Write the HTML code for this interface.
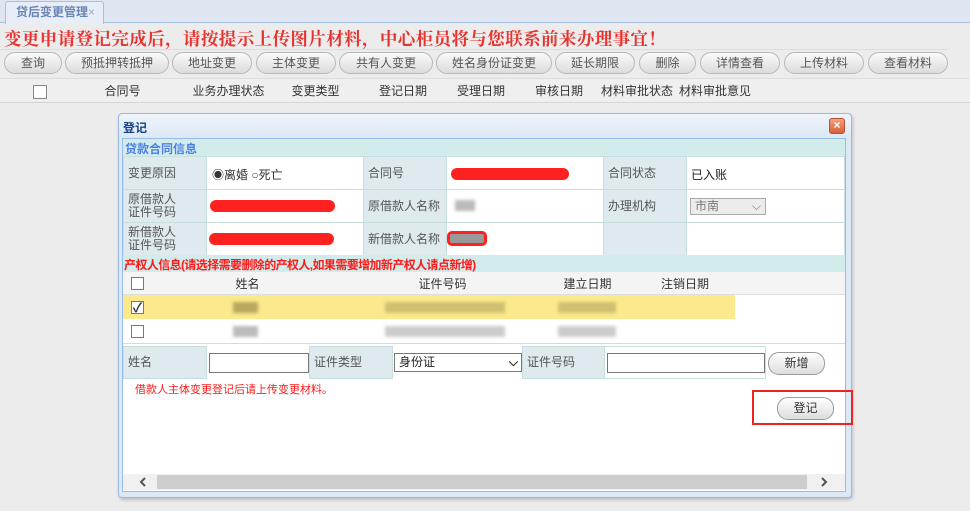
<!DOCTYPE html><html><head><meta charset="utf-8"><style>
*{margin:0;padding:0;box-sizing:border-box}
body{width:970px;height:511px;overflow:hidden;background:#ebebeb;font-family:"Liberation Sans","Noto Sans CJK SC",sans-serif;font-size:12px;color:#333;position:relative}
.a{position:absolute}
.btn{position:absolute;top:52px;height:22px;border:1px solid #b8b8b8;border-radius:11px;background:linear-gradient(#fafafa,#dcdcdc);text-align:center;line-height:20px;color:#555;font-size:12px}
.hd{position:absolute;top:80px;height:22px;line-height:22px;text-align:center;color:#333}
.lab{position:absolute;background:#deeaee;color:#555;padding-left:4px;border:1px solid #c6dede}
.cell{position:absolute;background:#fff;border:1px solid #c6dede}
.red{background:#ff2020;border-radius:6px;position:absolute;height:11px}
.blur{position:absolute;background:#bbb;filter:blur(1.5px)}
.cb{position:absolute;width:13px;height:13px;border:1px solid #777;background:#fff}
.rb{border-radius:11px;border:1px solid #999;background:linear-gradient(#fff,#ddd);text-align:center;position:absolute;line-height:21px;color:#333}
</style></head><body>
<div class="a" style="left:0;top:0;width:970px;height:23px;background:#dfe6f1;border-bottom:1px solid #a8c0df"></div>
<div class="a" style="left:5px;top:1px;width:99px;height:23px;background:#e8eef7;border:1px solid #a8c0df;border-bottom:none;border-radius:3px 3px 0 0;color:#6b85b5;line-height:20px;padding-left:10px;font-size:12px;font-weight:bold">贷后变更管理<span style="color:#9ab;font-weight:normal">×</span></div>
<div class="a" style="left:0;top:24px;width:970px;height:487px;background:#ececec"></div>
<div class="a" style="left:4px;top:26px;font-family:'Noto Serif CJK SC',serif;font-weight:bold;font-size:17.5px;color:#e8322e;white-space:nowrap;letter-spacing:0.4px">变更申请登记完成后，请按提示上传图片材料，中心柜员将与您联系前来办理事宜！</div>
<div class="a" style="left:0;top:49px;width:948px;height:1px;background:#ddd"></div>
<div class="btn" style="left:4px;width:58px">查询</div>
<div class="btn" style="left:65px;width:104px">预抵押转抵押</div>
<div class="btn" style="left:172px;width:80px">地址变更</div>
<div class="btn" style="left:256px;width:80px">主体变更</div>
<div class="btn" style="left:339px;width:94px">共有人变更</div>
<div class="btn" style="left:436px;width:116px">姓名身份证变更</div>
<div class="btn" style="left:555px;width:80px">延长期限</div>
<div class="btn" style="left:639px;width:57px">删除</div>
<div class="btn" style="left:700px;width:80px">详情查看</div>
<div class="btn" style="left:784px;width:80px">上传材料</div>
<div class="btn" style="left:868px;width:80px">查看材料</div>
<div class="a" style="left:0;top:78px;width:970px;height:25px;background:#efefef;border-top:1px solid #ddd;border-bottom:1px solid #d5d5d5"></div>
<div class="cb" style="left:33px;top:85px;width:14px;height:14px;border-color:#888"></div>
<div class="hd" style="left:55px;width:135px">合同号</div>
<div class="hd" style="left:190px;width:77px">业务办理状态</div>
<div class="hd" style="left:267px;width:97px">变更类型</div>
<div class="hd" style="left:364px;width:78px">登记日期</div>
<div class="hd" style="left:442px;width:78px">受理日期</div>
<div class="hd" style="left:520px;width:78px">审核日期</div>
<div class="hd" style="left:598px;width:78px">材料审批状态</div>
<div class="hd" style="left:676px;width:78px">材料审批意见</div>

<div class="a" style="left:118px;top:113px;width:734px;height:385px;background:#dde8f7;border:1px solid #99bbe8;border-radius:4px;box-shadow:1px 2px 3px rgba(0,0,0,.2)"></div>
<div class="a" style="left:119px;top:114px;width:732px;height:24px;background:linear-gradient(#eef4fb,#dde8f6);border-radius:4px 4px 0 0"></div>
<div class="a" style="left:123px;top:119px;font-weight:bold;color:#15428b;font-size:12px">登记</div>
<div class="a" style="left:829px;top:118px;width:16px;height:16px;background:linear-gradient(#f4a080,#d9603a);border:1px solid #b85030;border-radius:3px;color:#fff;font-size:12px;line-height:13px;text-align:center;font-weight:bold">×</div>
<div class="a" style="left:122px;top:138px;width:724px;height:354px;background:#fff;border:1px solid #99bbe8"></div>
<div class="a" style="left:123px;top:139px;width:722px;height:17px;background:#d2eceb"></div>
<div class="a" style="left:125px;top:140px;color:#4a7fe8;font-weight:bold;font-size:12px">贷款合同信息</div>
<div class="lab" style="left:123px;top:156px;width:84px;height:34px;line-height:32px">变更原因</div>
<div class="cell" style="left:206px;top:156px;width:158px;height:34px"></div>
<div class="a" style="left:212px;top:166px;font-size:12px;color:#333">◉离婚 ○死亡</div>
<div class="lab" style="left:363px;top:156px;width:84px;height:34px;line-height:32px">合同号</div>
<div class="cell" style="left:446px;top:156px;width:158px;height:34px"></div>
<div class="red" style="left:451px;top:168px;width:118px;height:12px"></div>
<div class="lab" style="left:603px;top:156px;width:84px;height:34px;line-height:32px">合同状态</div>
<div class="cell" style="left:686px;top:156px;width:159px;height:34px"></div>
<div class="a" style="left:691px;top:166px;color:#222">已入账</div>

<div class="lab" style="left:123px;top:189px;width:84px;height:34px;line-height:13px;padding-top:3px">原借款人<br>证件号码</div>
<div class="cell" style="left:206px;top:189px;width:158px;height:34px"></div>
<div class="red" style="left:210px;top:200px;width:125px;height:12px"></div>
<div class="lab" style="left:363px;top:189px;width:84px;height:34px;line-height:32px">原借款人名称</div>
<div class="cell" style="left:446px;top:189px;width:158px;height:34px"></div>
<div class="blur" style="left:455px;top:200px;width:20px;height:11px"></div>
<div class="lab" style="left:603px;top:189px;width:84px;height:34px;line-height:32px">办理机构</div>
<div class="cell" style="left:686px;top:189px;width:159px;height:34px"></div>
<div class="a" style="left:690px;top:198px;width:76px;height:17px;border:1px solid #aaa;background:#ececec;color:#777;padding-left:4px;line-height:15px">市南<span style="position:absolute;right:4px">⌵</span></div>

<div class="lab" style="left:123px;top:222px;width:84px;height:34px;line-height:13px;padding-top:3px">新借款人<br>证件号码</div>
<div class="cell" style="left:206px;top:222px;width:158px;height:34px"></div>
<div class="red" style="left:209px;top:233px;width:125px;height:12px"></div>
<div class="lab" style="left:363px;top:222px;width:84px;height:34px;line-height:32px">新借款人名称</div>
<div class="cell" style="left:446px;top:222px;width:158px;height:34px"></div>
<div class="a" style="left:447px;top:231px;width:40px;height:15px;border:3px solid #ff2020;border-radius:5px;background:#999"></div>
<div class="lab" style="left:603px;top:222px;width:84px;height:34px"></div>
<div class="cell" style="left:686px;top:222px;width:159px;height:34px"></div>

<div class="a" style="left:123px;top:255px;width:722px;height:17px;background:#d2eceb"></div>
<div class="a" style="left:124px;top:256px;color:#ff1a1a;font-weight:bold;font-size:12px;letter-spacing:-0.6px;white-space:nowrap">产权人信息(请选择需要删除的产权人,如果需要增加新产权人请点新增)</div>
<div class="a" style="left:123px;top:272px;width:722px;height:23px;background:#f4f4f4;border-bottom:1px solid #ddd"></div>
<div class="cb" style="left:131px;top:277px"></div>
<div class="hd" style="left:150px;top:273px;width:195px">姓名</div>
<div class="hd" style="left:345px;top:273px;width:195px">证件号码</div>
<div class="hd" style="left:540px;top:273px;width:95px">建立日期</div>
<div class="hd" style="left:635px;top:273px;width:100px">注销日期</div>
<div class="a" style="left:123px;top:295px;width:612px;height:24px;background:#fbe98c"></div>
<div class="cb" style="left:131px;top:301px;line-height:11px;font-size:13px;text-align:center;font-weight:bold">✓</div>
<div class="blur" style="left:233px;top:302px;width:25px;height:11px;background:#b8a860"></div>
<div class="blur" style="left:385px;top:302px;width:120px;height:11px;background:#d0c070"></div>
<div class="blur" style="left:558px;top:302px;width:58px;height:11px;background:#d0c070"></div>
<div class="cb" style="left:131px;top:325px"></div>
<div class="blur" style="left:233px;top:326px;width:25px;height:11px"></div>
<div class="blur" style="left:385px;top:326px;width:120px;height:11px;background:#ccc"></div>
<div class="blur" style="left:558px;top:326px;width:58px;height:11px;background:#ccc"></div>
<div class="a" style="left:123px;top:343px;width:722px;height:1px;background:#ccdede"></div>

<div class="lab" style="left:123px;top:346px;width:84px;height:33px;line-height:31px">姓名</div>
<div class="a" style="left:209px;top:353px;width:100px;height:20px;border:1px solid #777"></div>
<div class="lab" style="left:309px;top:346px;width:84px;height:33px;line-height:31px">证件类型</div>
<div class="a" style="left:394px;top:353px;width:128px;height:19px;border:1px solid #777;padding-left:4px;line-height:17px;color:#222">身份证<span style="position:absolute;right:3px;font-weight:bold">⌵</span></div>
<div class="lab" style="left:522px;top:346px;width:83px;height:33px;line-height:31px">证件号码</div>
<div class="cell" style="left:604px;top:346px;width:162px;height:33px"></div>
<div class="a" style="left:607px;top:353px;width:158px;height:20px;border:1px solid #777"></div>
<div class="rb" style="left:768px;top:352px;width:57px;height:23px">新增</div>
<div class="a" style="left:135px;top:381px;color:#ff1a1a;font-size:11px">借款人主体变更登记后请上传变更材料。</div>
<div class="a" style="left:752px;top:390px;width:101px;height:35px;border:2px solid #ee2222"></div>
<div class="rb" style="left:777px;top:397px;width:57px;height:23px">登记</div>
<div class="a" style="left:123px;top:474px;width:722px;height:16px;background:#f0f0f0"></div>
<div class="a" style="left:157px;top:475px;width:650px;height:14px;background:#cdcdcd"></div>
<svg class="a" style="left:138px;top:477px" width="10" height="10"><path d="M7 1 L3 5 L7 9" stroke="#555" stroke-width="2" fill="none"/></svg>
<svg class="a" style="left:819px;top:477px" width="10" height="10"><path d="M3 1 L7 5 L3 9" stroke="#555" stroke-width="2" fill="none"/></svg>
</body></html>
